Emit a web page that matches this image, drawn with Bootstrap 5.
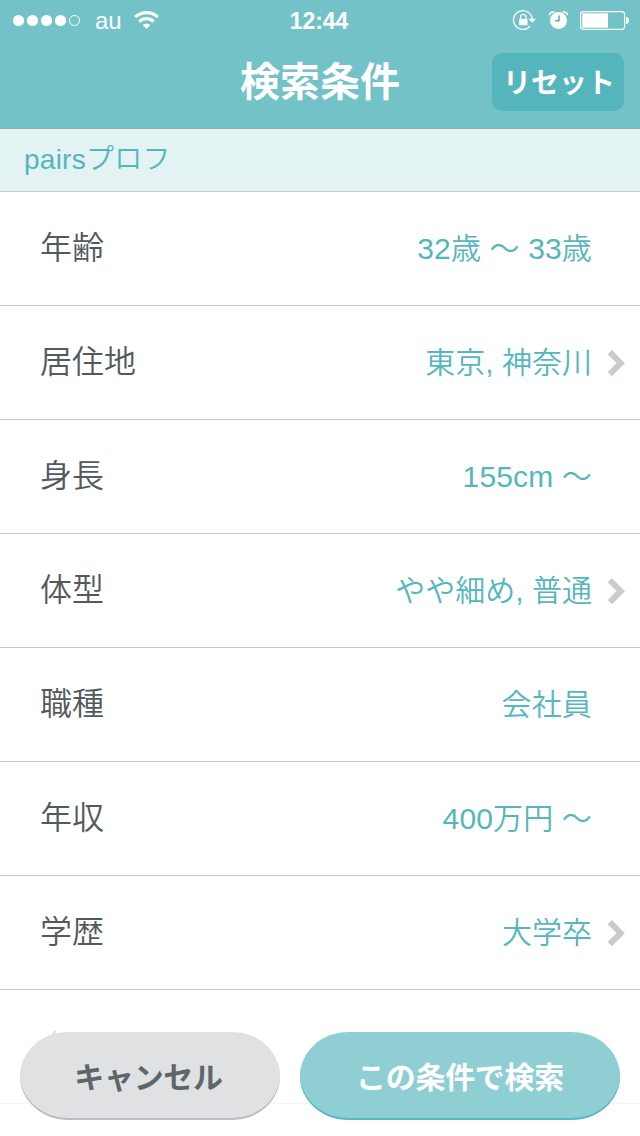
<!DOCTYPE html>
<html lang="ja">
<head>
<meta charset="utf-8">
<meta name="viewport" content="width=device-width, initial-scale=1">
<title>検索条件</title>
<link href="https://cdn.jsdelivr.net/npm/bootstrap@5.3.0/dist/css/bootstrap.min.css" rel="stylesheet">
<style>
  body { font-family: "Liberation Sans", "Noto Sans CJK JP", sans-serif; height: 1136px; color: #54595d; }
  .app-head { background: #73c2c8; height: 129px; border-bottom: 1px solid #a3a8aa; color: #fff; }
  .status { height: 40px; }
  .status svg { display: block; margin-bottom: 2px; }
  .carrier { font-size: 24px; line-height: 42px; margin-left: 13px; }
  .wifi { margin-left: 8px; }
  .clock { font-size: 23px; font-weight: 700; line-height: 42px; letter-spacing: -.1px; padding-right: 4px; }
  .status-icons { padding-right: 10px; }
  .title-text { font: 700 40px/60px "Noto Sans CJK JP", sans-serif; padding-top: 9px; }
  .title-row { height: 88px; }
  .btn-reset { --bs-btn-color: #fff; --bs-btn-bg: #55b5bc; --bs-btn-hover-color: #fff; --bs-btn-hover-bg: #4aa8af; width: 132px; height: 58px; border: 0; border-radius: 10px; font: 700 28px/56px "Noto Sans CJK JP", sans-serif; margin: 13px 16px 0 0; padding: 0 0 2px 2px; }
  .section-head { height: 63px; background: #e3f3f4; border-bottom: 1px solid #c3cccf; color: #55b6bd; font-size: 28px; font-weight: 350; line-height: 62px; letter-spacing: .25px; padding-left: 24px; }
  .list-group > .cond { height: 114px; border: 0; border-bottom: 1px solid #c5c6c9; border-radius: 0; padding: 0 15px 0 40px; }
  .cond-label { font-size: 32px; font-weight: 350; line-height: 48px; color: #54595d; padding-bottom: 2px; }
  .cond-value { font-size: 30px; font-weight: 350; line-height: 46px; letter-spacing: .15px; color: #55b6bd; margin-right: 33px; }
  .cond-value.has-next { margin-right: 15px; letter-spacing: 0; }
  .peek { margin: 40px 0 0 12px; }
  .actions { height: 146px; background: rgba(255,255,255,.8); padding: 42px 20px 0; gap: 20px; }
  .btn-pill { height: 88px; border: 0; border-radius: 48px / 44px; font: 700 30px/86px "Noto Sans CJK JP", sans-serif; letter-spacing: -.3px; padding: 0 0 2px; }
  .btn-cancel { --bs-btn-color: #5e666b; --bs-btn-bg: #e0e1e3; --bs-btn-hover-bg: #d6d7d9; width: 260px; box-shadow: inset 0 -2px 0 #b9bec2; padding-right: 3px; }
  .btn-search { --bs-btn-color: #fff; --bs-btn-bg: #8fcfd4; --bs-btn-hover-color: #fff; --bs-btn-hover-bg: #80c6cc; width: 320px; box-shadow: inset 0 -2px 0 #55b9c0; }
</style>
</head>
<body class="bg-white overflow-hidden position-relative">
<header class="app-head">
  <div class="status row g-0">
    <div class="col d-flex align-items-center ps-2 ms-1">
      <svg width="70" height="14" viewBox="12 13 70 14" fill="#fff"><circle cx="18.5" cy="20.5" r="5.6"/><circle cx="32.5" cy="20.5" r="5.6"/><circle cx="46.5" cy="20.5" r="5.6"/><circle cx="60.5" cy="20.5" r="5.6"/><circle cx="74.5" cy="20.5" r="5" fill="none" stroke="#fff"/></svg>
      <span class="carrier">au</span>
      <svg class="wifi" width="30" height="20" viewBox="130 10 30 20" fill="none" stroke="#fff"><path d="M135.3 17.2a16 16 0 0 1 22.4 0" stroke-width="3.2"/><path d="M139.4 21.6a10.2 10.2 0 0 1 14.2 0" stroke-width="3.2"/><path d="M142.7 25a5.4 5.4 0 0 1 7.6 0L146.5 29z" fill="#fff" stroke="none"/></svg>
    </div>
    <div class="col-auto clock">12:44</div>
    <div class="col d-flex justify-content-end align-items-center status-icons">
      <svg width="118" height="22" viewBox="512 9 118 22" fill="none" stroke="#fff">
        <path d="M532.3 19.4A9.4 9.4 0 1 0 530.2 26" stroke-width="1.3"/>
        <path d="M528.5 18.7h7.5l-3.7 4z" fill="#fff" stroke="none"/>
        <rect x="519" y="19" width="8.5" height="6.2" fill="#fff" stroke="none"/>
        <path d="M520.6 19v-1.7a2.7 2.9 0 0 1 5.4 0V19" stroke-width="1.3"/>
        <circle cx="558.5" cy="20.5" r="8.5" fill="#fff" stroke="none"/>
        <path d="M559 15.5v5.3h-4" stroke="#55b5bc" stroke-width="1.6"/>
        <path d="M549.8 15.2q-.8-3 4.4-3.4M567.2 15.2q.8-3-4.4-3.4" stroke-width="1.8"/>
        <rect x="580.6" y="11.6" width="44" height="17.8" rx="2.8" stroke-width="1.2"/>
        <path d="M582.3 13.3H608v14.4h-25.7z" fill="#fff" stroke="none"/>
        <path d="M626 17q3 .3 3 3.5t-3 3.5z" fill="#fff" stroke="none"/>
      </svg>
    </div>
  </div>
  <div class="title-row row g-0">
    <div class="col"></div>
    <h1 class="col-auto title-text mb-0">検索条件</h1>
    <div class="col text-end"><button class="btn btn-reset">リセット</button></div>
  </div>
</header>
<main>
  <div class="section-head">pairsプロフ</div>
  <div class="list-group">
    <div class="cond list-group-item d-flex align-items-center"><span class="cond-label me-auto">年齢</span><span class="cond-value">32歳 〜 33歳</span></div>
    <div class="cond list-group-item d-flex align-items-center"><span class="cond-label me-auto">居住地</span><span class="cond-value has-next">東京, 神奈川</span><svg width="18" height="28" viewBox="0 0 18 28" fill="none" stroke="#c9cccf" stroke-width="6"><path d="M2.8 3.2 13.7 14.2 2.8 25.2"/></svg></div>
    <div class="cond list-group-item d-flex align-items-center"><span class="cond-label me-auto">身長</span><span class="cond-value">155cm 〜</span></div>
    <div class="cond list-group-item d-flex align-items-center"><span class="cond-label me-auto">体型</span><span class="cond-value has-next">やや細め, 普通</span><svg width="18" height="28" viewBox="0 0 18 28" fill="none" stroke="#c9cccf" stroke-width="6"><path d="M2.8 3.2 13.7 14.2 2.8 25.2"/></svg></div>
    <div class="cond list-group-item d-flex align-items-center"><span class="cond-label me-auto">職種</span><span class="cond-value">会社員</span></div>
    <div class="cond list-group-item d-flex align-items-center"><span class="cond-label me-auto">年収</span><span class="cond-value">400万円 〜</span></div>
    <div class="cond list-group-item d-flex align-items-center"><span class="cond-label me-auto">学歴</span><span class="cond-value has-next">大学卒</span><svg width="18" height="28" viewBox="0 0 18 28" fill="none" stroke="#c9cccf" stroke-width="6"><path d="M2.8 3.2 13.7 14.2 2.8 25.2"/></svg></div>
    <div class="cond list-group-item d-flex align-items-start"><svg class="peek" width="5" height="6" viewBox="0 0 5 6" fill="none" stroke="#54595d" stroke-width="2.2"><path d="M3.2.8 1 5.2"/></svg></div>
  </div>
</main>
<footer class="actions fixed-bottom d-flex align-items-start">
  <button class="btn btn-pill btn-cancel">キャンセル</button>
  <button class="btn btn-pill btn-search">この条件で検索</button>
</footer>
<script src="https://cdn.jsdelivr.net/npm/bootstrap@5.3.0/dist/js/bootstrap.bundle.min.js"></script>
</body>
</html>
